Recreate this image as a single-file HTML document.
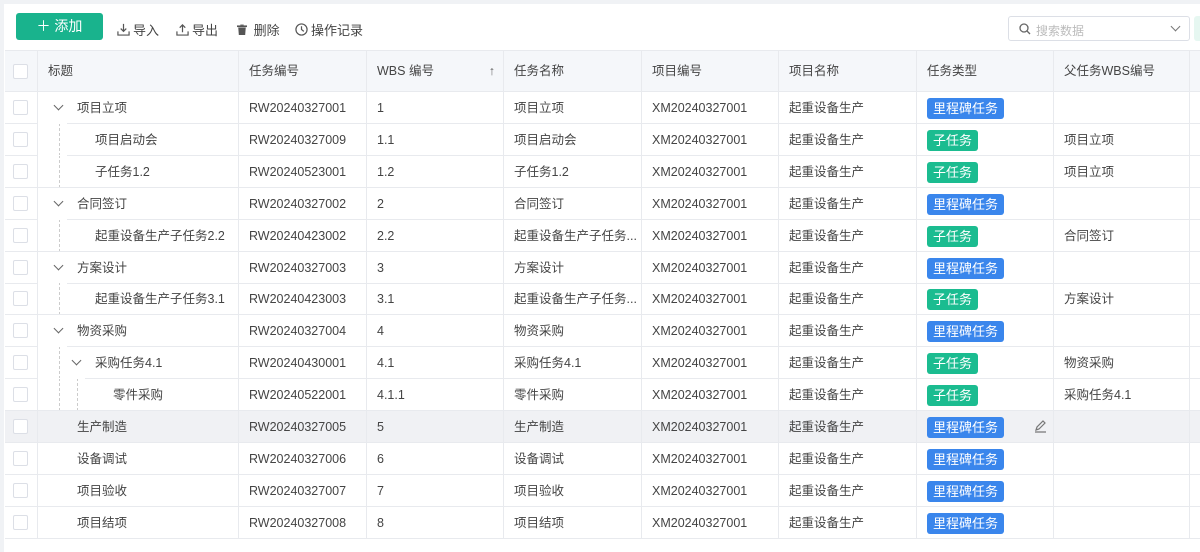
<!DOCTYPE html><html><head><meta charset="utf-8"><style>
body{margin:0;width:1200px;height:552px;background:#f0f2f5;font-family:"Liberation Sans","Noto Sans CJK SC",sans-serif;font-size:12.5px;color:#444;overflow:hidden;position:relative}
.card{position:absolute;left:4px;top:4px;right:0;bottom:0;background:#fff}
.btn{position:absolute;left:16px;top:13px;width:87px;height:27px;background:#19b38d;border-radius:3px;color:#fff;font-size:14px;line-height:27px;text-align:center}
.tb{position:absolute;top:20px;font-size:13px;color:#444;display:flex;align-items:center;gap:3px}
.search{position:absolute;left:1008px;top:16px;width:182px;height:25px;border:1px solid #dcdfe6;border-radius:3px;box-sizing:border-box;background:#fff}
.row{position:absolute;left:5px;width:1195px;height:32px;border-bottom:1px solid #e8eaee;box-sizing:border-box}
.row>div{position:absolute;top:0;height:100%;border-right:1px solid #e8eaee;box-sizing:border-box;line-height:33px;padding-left:10px;white-space:nowrap;overflow:hidden}
.row>div:nth-child(1){left:0;width:33px}
.row>div:nth-child(2){left:33px;width:201px;padding:0}
.row>div:nth-child(3){left:234px;width:128px}
.row>div:nth-child(4){left:362px;width:137px}
.row>div:nth-child(5){left:499px;width:138px}
.row>div:nth-child(6){left:637px;width:137px}
.row>div:nth-child(7){left:774px;width:138px}
.row>div:nth-child(8){left:912px;width:137px}
.row>div:nth-child(9){left:1049px;width:136px}
.row>div:nth-child(10){left:1185px;width:10px}
.hd{background:#f5f7fa;height:42px;top:50px;border-top:1px solid #e8eaee}
.hd>div{line-height:41px}
.cb{position:absolute;left:8px;top:8px;width:15px;height:15px;border:1px solid #dcdfe6;border-radius:2px;box-sizing:border-box;background:#fff}
.hd .cb{top:13px}
.tag{display:inline-block;color:#fff;font-size:13px;line-height:21px;height:21px;padding:0 6px;border-radius:3px;vertical-align:middle}
.b{background:#3a86ec}.g{background:#1bbc90}
.chev{position:absolute;top:10px;width:6px;height:6px;border-right:1.1px solid #666;border-bottom:1.1px solid #666;transform:rotate(45deg)}
.t{position:absolute}
.l0{left:39px}.l1{left:57px}.l2{left:75px}
.vl{position:absolute;top:-6px;height:38px;border-left:1px dashed #ccc}
.v1{left:21px}.v2{left:39px}
.w{position:absolute;bottom:-1px;height:1px;background:#fff;left:33px}
</style></head><body>
<div class="card"></div>
<div class="btn">＋ 添加</div>
<div class="tb" style="left:117px"><svg width="13" height="13" viewBox="0 0 14 14" fill="none" stroke="#555" stroke-width="1.3"><path d="M7 1v8M4 6l3 3 3-3M1 9v4h12V9"/></svg>导入</div>
<div class="tb" style="left:176px"><svg width="13" height="13" viewBox="0 0 14 14" fill="none" stroke="#555" stroke-width="1.3"><path d="M7 10V2M4 5l3-3 3 3M1 9v4h12V9"/></svg>导出</div>
<div class="tb" style="left:237px"><svg width="10" height="12" viewBox="0 0 12 13" fill="#555"><rect x="0" y="1" width="12" height="2"/><rect x="4" y="0" width="4" height="1"/><path d="M1.5 3.5h9l-.7 9h-7.6z"/></svg>&nbsp;删除</div>
<div class="tb" style="left:295px"><svg width="13" height="13" viewBox="0 0 14 14" fill="none" stroke="#555" stroke-width="1.3"><circle cx="7" cy="7" r="6"/><path d="M7 3.5V7l2.5 2"/></svg>操作记录</div>
<div class="search"><svg style="position:absolute;left:10px;top:6px" width="12" height="12" viewBox="0 0 12 12" fill="none" stroke="#666" stroke-width="1.3"><circle cx="5" cy="5" r="4"/><path d="M8 8l3 3"/></svg><span style="position:absolute;left:27px;top:5px;font-size:12px;color:#bbb">搜索数据</span><span style="position:absolute;right:10px;top:6px;width:6px;height:6px;border-right:1.2px solid #777;border-bottom:1.2px solid #777;transform:rotate(45deg)"></span></div>
<div style="position:absolute;left:1194px;top:16px;width:6px;height:25px;background:#e6f7f1;border-radius:3px 0 0 3px"></div>

<div class="row hd"><div><span class="cb"></span></div><div style="padding-left:10px">标题</div><div>任务编号</div><div>WBS 编号<span style="position:absolute;right:8px;color:#666">↑</span></div><div>任务名称</div><div>项目编号</div><div>项目名称</div><div>任务类型</div><div>父任务WBS编号</div><div></div></div>

<div class="row" style="top:92px"><div><span class="cb"></span></div><div><span class="chev" style="left:17px"></span><span class="t l0">项目立项</span></div><div>RW20240327001</div><div>1</div><div>项目立项</div><div>XM20240327001</div><div>起重设备生产</div><div><span class="tag b">里程碑任务</span></div><div></div><div></div><span class="w" style="width:29px"></span></div>
<div class="row" style="top:124px"><div><span class="cb"></span></div><div><span class="vl v1"></span><span class="t l1">项目启动会</span></div><div>RW20240327009</div><div>1.1</div><div>项目启动会</div><div>XM20240327001</div><div>起重设备生产</div><div><span class="tag g">子任务</span></div><div>项目立项</div><div></div><span class="w" style="width:29px"></span></div>
<div class="row" style="top:156px"><div><span class="cb"></span></div><div><span class="vl v1"></span><span class="t l1">子任务1.2</span></div><div>RW20240523001</div><div>1.2</div><div>子任务1.2</div><div>XM20240327001</div><div>起重设备生产</div><div><span class="tag g">子任务</span></div><div>项目立项</div><div></div></div>
<div class="row" style="top:188px"><div><span class="cb"></span></div><div><span class="chev" style="left:17px"></span><span class="t l0">合同签订</span></div><div>RW20240327002</div><div>2</div><div>合同签订</div><div>XM20240327001</div><div>起重设备生产</div><div><span class="tag b">里程碑任务</span></div><div></div><div></div><span class="w" style="width:29px"></span></div>
<div class="row" style="top:220px"><div><span class="cb"></span></div><div><span class="vl v1"></span><span class="t l1">起重设备生产子任务2.2</span></div><div>RW20240423002</div><div>2.2</div><div>起重设备生产子任务...</div><div>XM20240327001</div><div>起重设备生产</div><div><span class="tag g">子任务</span></div><div>合同签订</div><div></div></div>
<div class="row" style="top:252px"><div><span class="cb"></span></div><div><span class="chev" style="left:17px"></span><span class="t l0">方案设计</span></div><div>RW20240327003</div><div>3</div><div>方案设计</div><div>XM20240327001</div><div>起重设备生产</div><div><span class="tag b">里程碑任务</span></div><div></div><div></div><span class="w" style="width:29px"></span></div>
<div class="row" style="top:283px"><div><span class="cb"></span></div><div><span class="vl v1"></span><span class="t l1">起重设备生产子任务3.1</span></div><div>RW20240423003</div><div>3.1</div><div>起重设备生产子任务...</div><div>XM20240327001</div><div>起重设备生产</div><div><span class="tag g">子任务</span></div><div>方案设计</div><div></div></div>
<div class="row" style="top:315px"><div><span class="cb"></span></div><div><span class="chev" style="left:17px"></span><span class="t l0">物资采购</span></div><div>RW20240327004</div><div>4</div><div>物资采购</div><div>XM20240327001</div><div>起重设备生产</div><div><span class="tag b">里程碑任务</span></div><div></div><div></div><span class="w" style="width:29px"></span></div>
<div class="row" style="top:347px"><div><span class="cb"></span></div><div><span class="vl v1"></span><span class="chev" style="left:35px"></span><span class="t l1">采购任务4.1</span></div><div>RW20240430001</div><div>4.1</div><div>采购任务4.1</div><div>XM20240327001</div><div>起重设备生产</div><div><span class="tag g">子任务</span></div><div>物资采购</div><div></div><span class="w" style="width:47px"></span></div>
<div class="row" style="top:379px"><div><span class="cb"></span></div><div><span class="vl v1"></span><span class="vl v2"></span><span class="t l2">零件采购</span></div><div>RW20240522001</div><div>4.1.1</div><div>零件采购</div><div>XM20240327001</div><div>起重设备生产</div><div><span class="tag g">子任务</span></div><div>采购任务4.1</div><div></div></div>
<div class="row" style="top:411px;background:#f0f1f4"><div><span class="cb"></span></div><div><span class="t l0">生产制造</span></div><div>RW20240327005</div><div>5</div><div>生产制造</div><div>XM20240327001</div><div>起重设备生产</div><div><span class="tag b">里程碑任务</span><svg style="position:absolute;left:117px;top:9px" width="13" height="13" viewBox="0 0 13 13" fill="none" stroke="#777" stroke-width="1.2"><path d="M2 10l1-3 6-6 2 2-6 6zM1 12h11"/></svg></div><div></div><div></div></div>
<div class="row" style="top:443px"><div><span class="cb"></span></div><div><span class="t l0">设备调试</span></div><div>RW20240327006</div><div>6</div><div>设备调试</div><div>XM20240327001</div><div>起重设备生产</div><div><span class="tag b">里程碑任务</span></div><div></div><div></div></div>
<div class="row" style="top:475px"><div><span class="cb"></span></div><div><span class="t l0">项目验收</span></div><div>RW20240327007</div><div>7</div><div>项目验收</div><div>XM20240327001</div><div>起重设备生产</div><div><span class="tag b">里程碑任务</span></div><div></div><div></div></div>
<div class="row" style="top:507px"><div><span class="cb"></span></div><div><span class="t l0">项目结项</span></div><div>RW20240327008</div><div>8</div><div>项目结项</div><div>XM20240327001</div><div>起重设备生产</div><div><span class="tag b">里程碑任务</span></div><div></div><div></div></div>
</body></html>
